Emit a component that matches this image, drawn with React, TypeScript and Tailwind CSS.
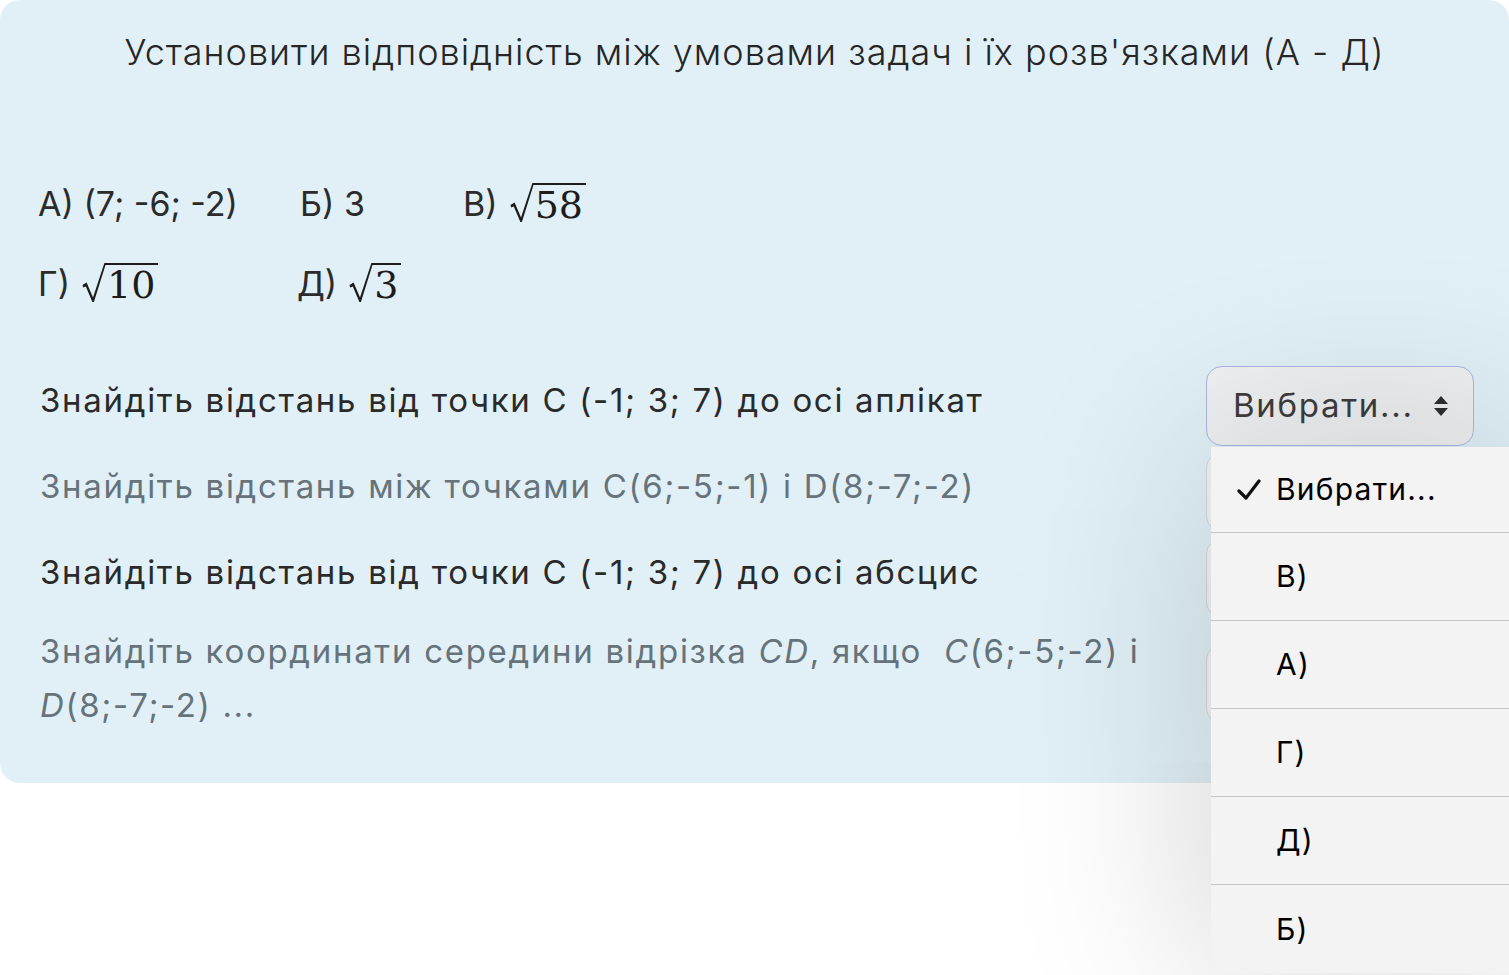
import React from "react";

function Sqrt({ v }: { v: string }) {
  return (
    <span className="inline-flex items-start">
      <svg width="24" height="40" viewBox="0 0 24 40" className="shrink-0">
        <path
          d="M0.5 22 L4.6 19.6 L11 34.5 L22.4 0 L24 0 L24 2 L23.5 2 L11.9 39 L10.4 39 L3.8 23.4 L1.2 24.6 Z"
          fill="#1c1c1c"
        />
      </svg>
      <span className="border-t-[2px] border-[#1c1c1c] pl-[1px] pr-[3px] pt-[3px] font-['DejaVu_Serif',serif] text-[38px] leading-[35px] text-[#1c1c1c]">
        {v}
      </span>
    </span>
  );
}

function Select({ label }: { label: boolean }) {
  return (
    <div
      className={
        "flex h-[80px] w-[268px] shrink-0 items-center justify-between rounded-[16px] border-[1.5px] pl-[26px] pr-[24px] " +
        (label ? "border-[#a9b7e6] bg-[#eef0f2]" : "border-[#d3d8db] bg-[#f3f4f5]")
      }
    >
      {label && <span className="text-[33px] tracking-[1.7px] text-[#3d3d3d]">Вибрати...</span>}
      {label && (
        <svg width="16" height="24" viewBox="0 0 16 24">
          <path d="M8 2 L15 10 L1 10 Z" fill="#2f2f2f" />
          <path d="M8 22 L15 14 L1 14 Z" fill="#2f2f2f" />
        </svg>
      )}
    </div>
  );
}

const questions = [
  { dark: true, text: <>Знайдіть відстань від точки С (-1; 3; 7) до осі аплікат</> },
  { dark: false, text: <>Знайдіть відстань між точками C(6;-5;-1) і D(8;-7;-2)</> },
  { dark: true, text: <>Знайдіть відстань від точки С (-1; 3; 7) до осі абсцис</> },
  {
    dark: false,
    text: (
      <>
        Знайдіть координати середини відрізка <i>CD</i>, якщо&nbsp; <i>C</i>(6;-5;-2) і
        <br />
        <i>D</i>(8;-7;-2) ...
      </>
    ),
  },
];

const menuItems = ["В)", "А)", "Г)", "Д)", "Б)"];

export default function App() {
  return (
    <div className="relative h-[975px] w-full overflow-hidden bg-white font-['Inter',sans-serif]">
      <div className="rounded-[20px] bg-[#e1f0f7] pb-[39px]">
        <h1 className="pt-[30px] text-center text-[36px] font-light leading-[44px] tracking-[1px] text-[#262626]">
          Установити відповідність між умовами задач і їх розв'язками (А - Д)
        </h1>

        {/* answer options */}
        <div className="mt-[89px] pl-[38px] text-[34px] text-[#2b2b2b]">
          <div className="flex h-[80px] items-center">
            <span className="w-[262px]">А) (7; -6; -2)</span>
            <span className="w-[163px]">Б) 3</span>
            <span className="flex items-center gap-[12px]">
              В) <Sqrt v="58" />
            </span>
          </div>
          <div className="flex h-[80px] items-center">
            <span className="flex w-[259px] items-center gap-[12px]">
              Г) <Sqrt v="10" />
            </span>
            <span className="flex items-center gap-[12px]">
              Д) <Sqrt v="3" />
            </span>
          </div>
        </div>

        {/* questions */}
        <div className="mt-[43px] flex flex-col gap-[6px] pl-[40px] pr-[35px]">
          {questions.map((q, i) => (
            <div key={i} className="flex items-center justify-between gap-2">
              <p
                className={
                  "whitespace-nowrap pb-3 text-[33px] leading-[54px] tracking-[1.7px] " +
                  (q.dark ? "text-[#2a2a2a]" : "text-[#66737a]")
                }
              >
                {q.text}
              </p>
              <Select label={i === 0} />
            </div>
          ))}
        </div>
      </div>

      {/* open native picker */}
      <div className="absolute left-[1211px] top-[447px] w-[330px] rounded-bl-[26px] bg-[#f3f3f3] shadow-[0_0_200px_rgba(0,0,0,0.2)]">
        <div className="flex h-[86px] items-center border-b border-[#c4c4c4] pl-[26px] text-[30px] tracking-[1.2px] text-black">
          <svg width="24" height="22" viewBox="0 0 24 22" className="mr-[15px]">
            <path d="M2 12 L9 19 L22 2" fill="none" stroke="#111" strokeWidth="3.2" strokeLinecap="round" strokeLinejoin="round" />
          </svg>
          Вибрати...
        </div>
        {menuItems.map((m, i) => (
          <div
            key={m}
            className={
              "flex h-[88px] items-center pl-[65px] text-[30px] tracking-[1.2px] text-black " +
              (i < menuItems.length - 1 ? "border-b border-[#c4c4c4]" : "")
            }
          >
            {m}
          </div>
        ))}
      </div>
    </div>
  );
}
